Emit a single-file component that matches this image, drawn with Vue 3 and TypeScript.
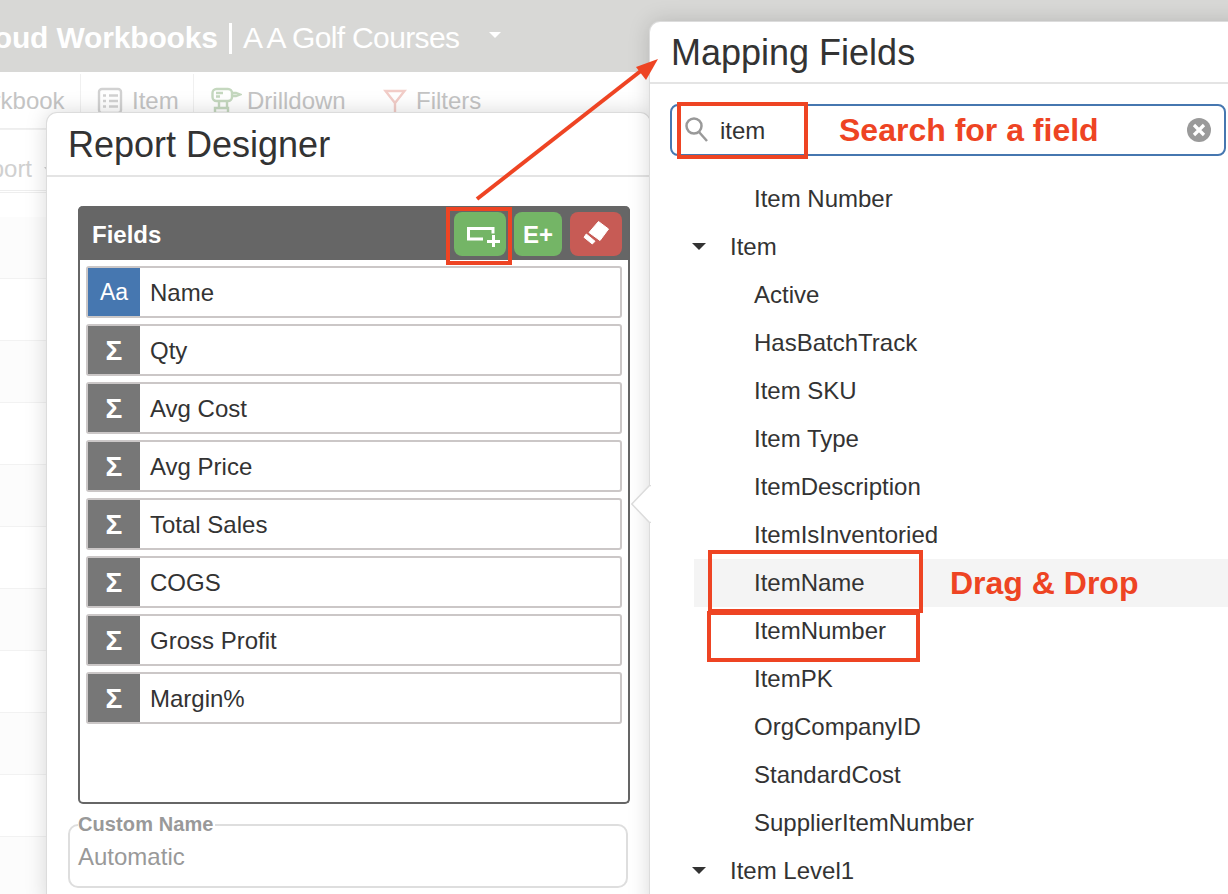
<script setup lang="ts">
interface Field { label: string; kind: 'text' | 'sum' }
interface Node { label: string; level: 0 | 1; hover?: boolean }

const fields: Field[] = [
  { label: 'Name', kind: 'text' },
  { label: 'Qty', kind: 'sum' },
  { label: 'Avg Cost', kind: 'sum' },
  { label: 'Avg Price', kind: 'sum' },
  { label: 'Total Sales', kind: 'sum' },
  { label: 'COGS', kind: 'sum' },
  { label: 'Gross Profit', kind: 'sum' },
  { label: 'Margin%', kind: 'sum' },
]

const nodes: Node[] = [
  { label: 'Item Number', level: 1 },
  { label: 'Item', level: 0 },
  { label: 'Active', level: 1 },
  { label: 'HasBatchTrack', level: 1 },
  { label: 'Item SKU', level: 1 },
  { label: 'Item Type', level: 1 },
  { label: 'ItemDescription', level: 1 },
  { label: 'ItemIsInventoried', level: 1 },
  { label: 'ItemName', level: 1, hover: true },
  { label: 'ItemNumber', level: 1 },
  { label: 'ItemPK', level: 1 },
  { label: 'OrgCompanyID', level: 1 },
  { label: 'StandardCost', level: 1 },
  { label: 'SupplierItemNumber', level: 1 },
  { label: 'Item Level1', level: 0 },
]

const bgRows = Array.from({ length: 11 }, (_, i) => i)
</script>

<template>
  <div class="stage">
    <!-- Faded application behind the dialogs -->
    <header class="topbar">
      <span class="brand">Cloud Workbooks</span>
      <span class="pipe"></span>
      <span class="company">A A Golf Courses</span>
      <span class="caret-light"></span>
    </header>
    <nav class="toolbar">
      <span class="tool tool-first">Workbook</span>
      <span class="tool tool-item">
        <svg width="26" height="28" viewBox="0 0 26 28" fill="none" stroke="#d2d2d2" stroke-width="2.400">
          <rect x="2" y="2" width="22" height="24" rx="3" />
          <path d="M6 8.500h3M6 14h3M6 19.500h3M12 8.500h9M12 14h9M12 19.500h9" />
        </svg>
        Item
      </span>
      <span class="tool tool-drill">
        <svg width="32" height="28" viewBox="0 0 32 28" fill="none" stroke="#c5d8bf" stroke-width="2.400">
          <rect x="2.500" y="2" width="19.500" height="12" rx="4" />
          <path d="M6 6h7M6 9.500h4M22 6h4l4 1.500-4 1.500h-4M9 14v7M17 14v7M5 26v-5h13v5z" />
        </svg>
        Drilldown
      </span>
      <span class="tool tool-filter">
        <svg width="24" height="26" viewBox="0 0 24 26" fill="none" stroke="#f2cdc8" stroke-width="2.400">
          <path d="M2.500 3h19L12 15zM12 15v10" />
        </svg>
        Filters
      </span>
    </nav>
    <div class="subbar"><span class="report">Report</span><span class="caret-faint"></span></div>
    <div class="bgrows">
      <div v-for="r in bgRows" :key="r" class="bgrow"></div>
    </div>

    <!-- Report Designer dialog -->
    <section class="dialog designer">
      <h2 class="dialog-title">Report Designer</h2>
      <div class="designer-body">
        <div class="panel">
          <div class="panel-head">
            <span class="panel-name">Fields</span>
            <button class="btn btn-green btn-wide">
              <svg width="40" height="26" viewBox="0 0 40 26" fill="none" stroke="#fff" stroke-width="3">
                <path d="M33 12.500V7.500H8.500V18H23" />
                <path d="M27 20.500h13M33.500 14v12" />
              </svg>
            </button>
            <button class="btn btn-green btn-e"><span class="btn-text">E+</span></button>
            <button class="btn btn-red btn-wide">
              <svg width="30" height="28" viewBox="0 0 30 28" fill="#fff" stroke="#fff" stroke-width="1" stroke-linejoin="round">
                <path d="M17.500 1.500 27.500 9 19 20.500 8 12.500z" />
                <path d="M3 17.300 5.300 14 14 21.300 11.300 24z" />
              </svg>
            </button>
          </div>
          <div class="panel-list">
            <div v-for="f in fields" :key="f.label" class="field">
              <span class="field-tag" :class="f.kind === 'text' ? 'tag-text' : 'tag-sum'">{{ f.kind === 'text' ? 'Aa' : 'Σ' }}</span>
              <span class="field-name">{{ f.label }}</span>
            </div>
          </div>
        </div>
        <fieldset class="custom">
          <legend>Custom Name</legend>
          <span class="placeholder">Automatic</span>
        </fieldset>
      </div>
    </section>

    <!-- Mapping Fields dialog -->
    <section class="dialog mapping">
      <svg class="pointer" width="20" height="38" viewBox="0 0 20 38">
        <path d="M20 .5H18.500L.8 19 18.500 37.500H20" fill="#fff" stroke="#dcdcdc" stroke-width="1.500" />
      </svg>
      <h2 class="dialog-title mapping-title">Mapping Fields</h2>
      <div class="search">
        <svg class="search-icon" width="26" height="28" viewBox="0 0 26 28" fill="none" stroke="#999" stroke-width="2.500">
          <circle cx="10" cy="10" r="7.500" />
          <path d="m15 16 8 9" />
        </svg>
        <span class="search-text">item</span>
        <svg class="clear-icon" width="26" height="26" viewBox="0 0 26 26">
          <circle cx="13" cy="13" r="12" fill="#9a9a9a" />
          <path d="m8 8 10 10M18 8 8 18" stroke="#fff" stroke-width="3.200" />
        </svg>
      </div>
      <ul class="tree">
        <li v-for="n in nodes" :key="n.label" class="node" :class="{ 'node-leaf': n.level === 1, 'node-hover': n.hover }">
          <span v-if="n.level === 0" class="caret"></span>
          {{ n.label }}
        </li>
      </ul>
    </section>

    <!-- Red tutorial annotations -->
    <svg class="arrow" width="1228" height="894" viewBox="0 0 1228 894">
      <path d="M477 199 642 70" stroke="#ee4423" stroke-width="4" />
      <path d="M658 59 636 67 646 80z" fill="#ee4423" />
    </svg>
    <div class="mark mark-add"></div>
    <div class="mark mark-search"></div>
    <div class="mark mark-name"></div>
    <div class="mark mark-number"></div>
    <span class="note note-search">Search for a field</span>
    <span class="note note-drag">Drag &amp; Drop</span>
  </div>
</template>

<style scoped>
.stage {
  position: relative;
  width: 1228px;
  height: 894px;
  overflow: hidden;
  background: #fff;
  font-family: "Liberation Sans", Arial, sans-serif;
  color: #333;
}
.topbar {
  display: flex;
  align-items: center;
  height: 72px;
  padding-top: 3px;
  background: #d8d8d6;
  color: #fff;
  box-sizing: border-box;
  white-space: nowrap;
}
.brand {
  margin-left: -36px;
  font-size: 30px;
  font-weight: 700;
  letter-spacing: -0.15px;
}
.pipe {
  width: 3px;
  height: 31px;
  margin: 2px 11px 0 11px;
  background: #fff;
}
.company {
  font-size: 30px;
  letter-spacing: -0.65px;
}
.caret-light {
  width: 0;
  height: 0;
  margin: -6px 0 0 30px;
  border-left: 6px solid transparent;
  border-right: 6px solid transparent;
  border-top: 6px solid #fff;
}
.toolbar {
  display: flex;
  align-items: center;
  height: 57px;
  padding-top: 2px;
  box-sizing: border-box;
  border-bottom: 1px solid #eee;
  color: #c4c4c4;
  font-size: 24px;
  white-space: nowrap;
}
.tool {
  display: flex;
  align-items: center;
  height: 100%;
  gap: 9px;
  box-sizing: border-box;
}
.tool-first {
  margin-left: -43px;
  width: 124px;
  border-right: 1px solid #f0f0f0;
}
.tool-item {
  width: 113px;
  padding-left: 16px;
  border-right: 1px solid #f0f0f0;
}
.tool-drill {
  width: 189px;
  padding-left: 16px;
  gap: 5px;
}
.tool-filter {
  gap: 9px;
}
.subbar {
  display: flex;
  align-items: center;
  height: 64px;
  border-top: 1px solid #f0f0f0;
  border-bottom: 3px double #eee;
  box-sizing: border-box;
  color: #d0d0d0;
  font-size: 24px;
}
.report {
  margin-left: -40px;
  margin-top: 18px;
}
.caret-faint {
  width: 0;
  height: 0;
  margin: 18px 0 0 12px;
  border-left: 4px solid transparent;
  border-right: 4px solid transparent;
  border-top: 5px solid #d0d0d0;
}
.bgrows {
  margin-top: 24px;
}
.bgrow {
  height: 61px;
  border-bottom: 1px solid #f2f2f2;
}
.bgrow:nth-child(odd) {
  background: #fcfcfc;
}

.dialog {
  position: absolute;
  box-sizing: border-box;
  background: #fff;
  box-shadow: 0 0 0 1px #dcdcdc, 0 0 22px rgba(0, 0, 0, 0.17);
}
.dialog-title {
  margin: 0;
  font-weight: 400;
  font-size: 36px;
  line-height: 60px;
  height: 60px;
  padding: 2px 0 0 21px;
  border-bottom: 2px solid #e4e4e4;
  color: #333;
}
.designer {
  left: 47px;
  top: 113px;
  width: 603px;
  height: 790px;
  border-radius: 10px 10px 0 0;
}
.designer-body {
  display: flex;
  flex-direction: column;
  padding: 29px 20px 0 21px;
}
.panel {
  display: flex;
  flex-direction: column;
  width: 552px;
  height: 598px;
  margin-left: 10px;
  box-sizing: border-box;
  border: 2px solid #666;
  border-top: 0;
  border-radius: 5px;
}
.panel-head {
  display: flex;
  align-items: center;
  gap: 8px;
  height: 54px;
  margin: 0 -2px;
  padding: 2px 8px 0 14px;
  box-sizing: border-box;
  background: #666;
  border-radius: 5px 5px 0 0;
}
.panel-name {
  flex: 1;
  padding-top: 2px;
  color: #fff;
  font-size: 24px;
  font-weight: 700;
}
.btn {
  display: flex;
  align-items: center;
  justify-content: center;
  height: 44px;
  padding: 0;
  border: 0;
  border-radius: 8px;
  color: #fff;
  font-family: inherit;
  font-size: 24px;
  font-weight: 700;
}
.btn-text {
  padding-top: 2px;
}
.btn-wide {
  width: 52px;
}
.btn-e {
  width: 48px;
}
.btn-green {
  background: #74b566;
}
.btn-red {
  background: #c75b55;
}
.panel-list {
  display: flex;
  flex-direction: column;
  gap: 6px;
  padding: 6px 6px 0;
}
.field {
  display: flex;
  align-items: stretch;
  height: 52px;
  box-sizing: border-box;
  border: 2px solid #cbc7c7;
  border-radius: 3px;
}
.field-tag {
  display: flex;
  align-items: center;
  justify-content: center;
  width: 52px;
  padding-top: 1px;
  box-sizing: border-box;
  color: #fff;
  font-weight: 700;
}
.tag-text {
  background: #4677b0;
  font-size: 23px;
  font-weight: 400;
}
.tag-sum {
  background: #777;
  font-size: 28px;
}
.field-name {
  align-self: center;
  margin: 2px 0 0 10px;
  font-size: 24px;
}
.custom {
  width: 560px;
  height: 73px;
  margin: 11px 0 0;
  padding: 0 0 0 8px;
  box-sizing: border-box;
  border: 2px solid #dedede;
  border-radius: 10px;
  color: #999;
}
.custom legend {
  position: relative;
  top: -1px;
  padding: 0 1px 0 0;
  font-size: 20px;
  font-weight: 700;
  letter-spacing: 0.1px;
  line-height: 20px;
}
.placeholder {
  display: block;
  margin-top: 5px;
  font-size: 24px;
  line-height: 34px;
}

.mapping {
  left: 650px;
  top: 22px;
  width: 600px;
  height: 890px;
  border-radius: 10px 0 0 0;
}
.mapping-title {
  height: 58px;
  line-height: 58px;
}
.pointer {
  position: absolute;
  left: -19px;
  top: 463px;
}
.search {
  display: flex;
  align-items: center;
  width: 556px;
  height: 52px;
  margin: 20px 0 0 20px;
  box-sizing: border-box;
  border: 2px solid #4677b0;
  border-radius: 8px;
}
.search-icon {
  margin-left: 12px;
}
.search-text {
  flex: 1;
  margin: 2px 0 0 10px;
  font-size: 24px;
}
.clear-icon {
  margin-right: 12px;
}
.tree {
  margin: 19px 0 0;
  padding: 0 0 0 44px;
  list-style: none;
}
.node {
  position: relative;
  height: 48px;
  padding-left: 36px;
  font-size: 24px;
  line-height: 48px;
  color: #333;
}
.node-leaf {
  padding-left: 60px;
}
.node-hover {
  background: #f4f4f4;
}
.caret {
  position: absolute;
  left: -2px;
  top: 20px;
  width: 0;
  height: 0;
  border-left: 7px solid transparent;
  border-right: 7px solid transparent;
  border-top: 7px solid #333;
}

.arrow {
  position: absolute;
  left: 0;
  top: 0;
  pointer-events: none;
}
.mark {
  position: absolute;
  box-sizing: border-box;
  border: 4px solid #ee4423;
}
.mark-add {
  left: 446px;
  top: 207px;
  width: 66px;
  height: 58px;
}
.mark-search {
  left: 677px;
  top: 102px;
  width: 131px;
  height: 57px;
}
.mark-name {
  left: 708px;
  top: 550px;
  width: 215px;
  height: 63px;
}
.mark-number {
  left: 707px;
  top: 611px;
  width: 213px;
  height: 51px;
}
.note {
  position: absolute;
  color: #ee4423;
  font-size: 32px;
  font-weight: 700;
  line-height: 36px;
  white-space: nowrap;
}
.note-search {
  left: 839px;
  top: 112px;
}
.note-drag {
  left: 950px;
  top: 565px;
}
</style>
